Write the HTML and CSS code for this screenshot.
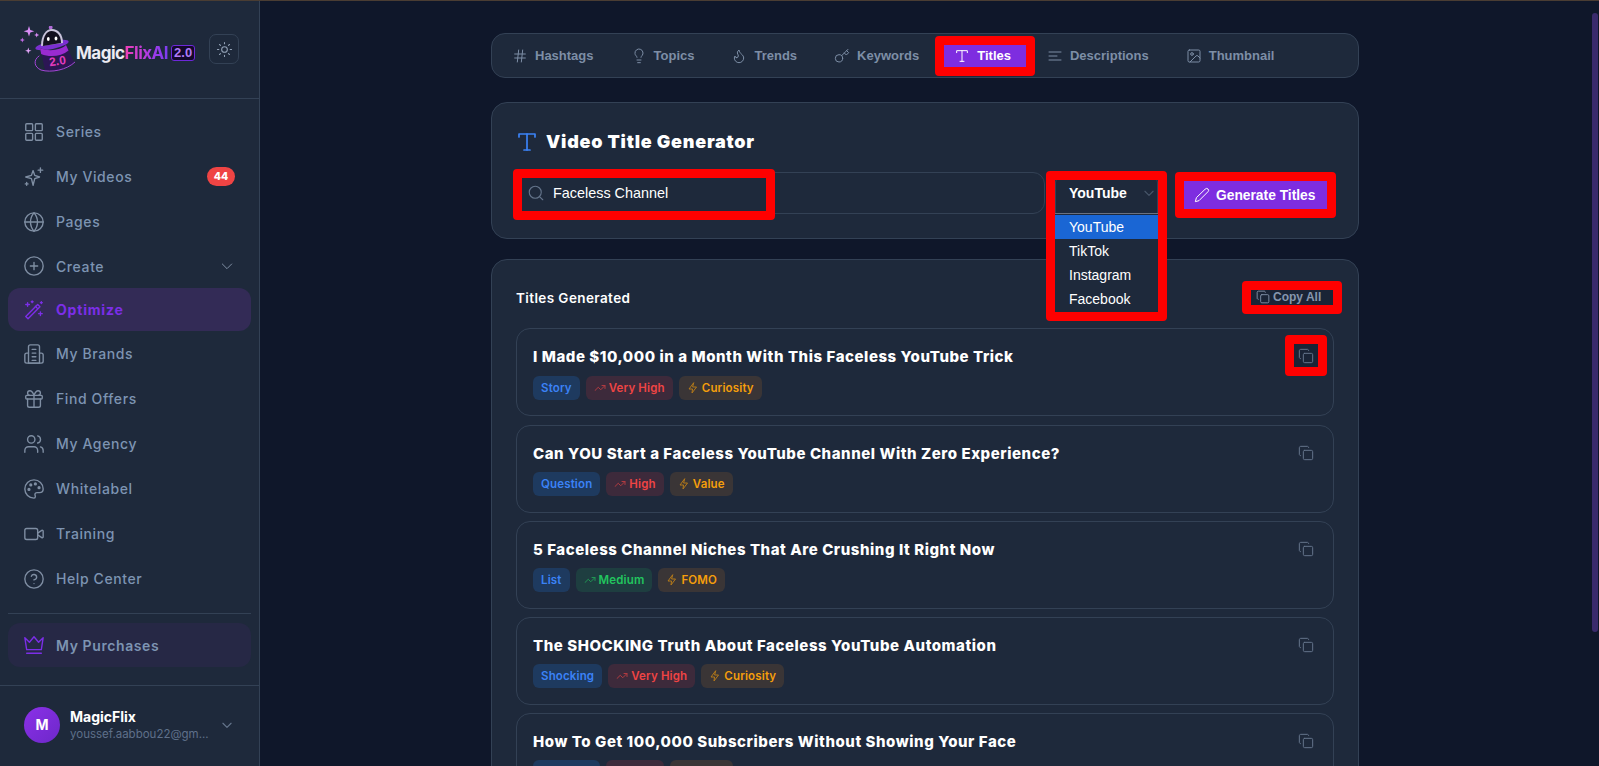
FILE: index.html
```html
<!DOCTYPE html>
<html>
<head>
    <meta charset="utf-8">
    <title>MagicFlixAI - Optimize</title>
    <link rel="stylesheet" href="styles.css">
</head>
<body>
<svg class="defs">
    <defs>
        <symbol id="i-copy" viewBox="0 0 24 24"><rect x="8" y="8" width="14" height="14" rx="2"/><path d="M4 16c-1.1 0-2-.9-2-2V4c0-1.1.9-2 2-2h10c1.1 0 2 .9 2 2"/></symbol>
        <symbol id="i-trend" viewBox="0 0 24 24"><path d="M22 7l-8.500 8.500-5-5L2 17"/><path d="M16 7h6v6"/></symbol>
        <symbol id="i-bolt" viewBox="0 0 24 24"><path d="M13 2L4 14h7l-1 8 9-12h-7z"/></symbol>
        <symbol id="i-t" viewBox="0 0 24 24"><path d="M4 7V4h16v3"/><path d="M12 4v16"/><path d="M9 20h6"/></symbol>
    </defs>
</svg>
<div class="app">
    <aside class="sidebar">
        <div class="side-head">
            <div class="logo">
                <svg class="logo-hat" viewBox="0 0 56 50">
                    <path d="M10 0l1.300 4 4 1.300-4 1.300-1.300 4-1.300-4-4-1.300 4-1.300z" fill="#d98cf5"/>
                    <path d="M17.700 6.500l.7 1.800 1.800.7-1.800.7-.7 1.800-.7-1.800-1.800-.7 1.800-.7z" fill="#d98cf5"/>
                    <path d="M3.300 11.500l.7 1.800 1.800.7-1.800.7-.7 1.800-.7-1.800-1.800-.7 1.800-.7z" fill="#c26be8"/>
                    <path d="M9.300 21.500l.8 2.400 2.400.8-2.400.8-.8 2.400-.8-2.400-2.400-.8 2.400-.8z" fill="#e3a5f8"/>
                    <circle cx="31.700" cy="1.500" r="1.900" fill="#b06ad8"/>
                    <ellipse cx="33" cy="19" rx="17" ry="4" transform="rotate(-12 33 19)" fill="#7b2fd0"/>
                    <path d="M22 20C22 9 27 3 33 3c6 0 11 5 11 14z" fill="#c9c4dc"/>
                    <path d="M24 20C24 10 28 5 32.500 5c5 0 9.500 4 9.500 12z" fill="#12101f"/>
                    <ellipse cx="29.300" cy="13" rx="1.400" ry="2" fill="#fff"/>
                    <ellipse cx="37" cy="12.500" rx="1.400" ry="2" fill="#fff"/>
                    <path d="M21 22c9 4 21 2 26-3l8 17c-7 8-21 10-29 8z" fill="#2c1654"/>
                    <path d="M21 22c9 4 21 2 26-3l2.500 5.500c-7 6-19 7-27.300 3.500z" fill="#9a2bd0"/>
                    <path d="M20 30c-6 4-5 11 2 14 10 3 26 0 34-8" fill="none" stroke="#a445d8" stroke-width="1"/>
                    <text class="hat-num" x="39" y="39" text-anchor="middle" transform="rotate(-8 39 39)">2.0</text>
                </svg>
                <span class="logo-text"><span class="logo-magic">Magic</span><span class="logo-flix">FlixAI</span></span>
                <span class="logo-ver">2.0</span>
            </div>
            <button class="theme-btn">
                <svg viewBox="0 0 24 24"><circle cx="12" cy="12" r="4"/><path d="M12 2v2M12 20v2M4.900 4.900l1.400 1.400M17.700 17.700l1.400 1.400M2 12h2M20 12h2M6.300 17.700l-1.400 1.400M19.100 4.900l-1.400 1.400"/></svg>
            </button>
        </div>
        <nav class="nav">
            <a class="nav-item"><svg viewBox="0 0 24 24"><rect x="3" y="3" width="7.500" height="7.500" rx="1"/><rect x="13.500" y="3" width="7.500" height="7.500" rx="1"/><rect x="3" y="13.500" width="7.500" height="7.500" rx="1"/><rect x="13.500" y="13.500" width="7.500" height="7.500" rx="1"/></svg>Series</a>
            <a class="nav-item"><svg viewBox="0 0 24 24"><path d="M11 5l1.800 5.200L18 12l-5.200 1.800L11 21l-1.800-7.200L3 12l6.200-1.800z"/><path d="M19 2v5M16.500 4.500h5M4 18v3M2.500 19.500h3"/></svg>My Videos<span class="badge">44</span></a>
            <a class="nav-item"><svg viewBox="0 0 24 24"><circle cx="12" cy="12" r="10"/><path d="M2 12h20"/><path d="M12 2a15 15 0 0 1 0 20 15 15 0 0 1 0-20z"/></svg>Pages</a>
            <a class="nav-item short"><svg viewBox="0 0 24 24"><circle cx="12" cy="12" r="10"/><path d="M12 8v8M8 12h8"/></svg>Create<svg class="nav-chev" viewBox="0 0 24 24"><path d="M5 9l7 7 7-7"/></svg></a>
            <a class="nav-item active"><svg viewBox="0 0 24 24"><path d="M3 20L16 7l2.500 2.500-13 13z" transform="translate(0 -1)"/><path d="M13.500 9l2.500 2.500" transform="translate(0 -1)"/><path d="M5 4v4M3 6h4M10 2v2M9 3h2M19 14v4M17 16h4M20 3v2M19 4h2"/></svg>Optimize</a>
            <a class="nav-item"><svg viewBox="0 0 24 24"><path d="M6 22V4c0-1.100.9-2 2-2h8c1.100 0 2 .9 2 2v18z"/><path d="M6 11H4c-1.100 0-2 .9-2 2v7c0 1.100.9 2 2 2h16c1.100 0 2-.9 2-2v-7c0-1.100-.9-2-2-2h-2"/><path d="M10 7h4M10 11h4M10 15h4M10 19h4"/></svg>My Brands</a>
            <a class="nav-item"><svg viewBox="0 0 24 24"><rect x="3" y="8" width="18" height="4" rx="1"/><path d="M12 8v13"/><path d="M19 12v7c0 1.100-.9 2-2 2H7c-1.100 0-2-.9-2-2v-7"/><path d="M7.500 8a2.500 2.500 0 0 1 0-5C10 3 12 8 12 8s2-5 4.500-5a2.500 2.500 0 0 1 0 5"/></svg>Find Offers</a>
            <a class="nav-item"><svg viewBox="0 0 24 24"><path d="M16 21v-2a4 4 0 0 0-4-4H6a4 4 0 0 0-4 4v2"/><circle cx="9" cy="7" r="4"/><path d="M22 21v-2a4 4 0 0 0-3-3.900"/><path d="M16 3.100a4 4 0 0 1 0 7.800"/></svg>My Agency</a>
            <a class="nav-item"><svg viewBox="0 0 24 24"><path d="M12 22a10 10 0 1 1 10-10c0 2.800-2.200 4-4 4h-2.500c-1.500 0-2.500 1-2.500 2.200 0 .7.500 1.100.5 1.800 0 1.200-.6 2-1.500 2z"/><circle cx="13.500" cy="6.500" r="1" fill="currentColor"/><circle cx="17.500" cy="10.500" r="1" fill="currentColor"/><circle cx="8.500" cy="7.500" r="1" fill="currentColor"/><circle cx="6.500" cy="12.500" r="1" fill="currentColor"/></svg>Whitelabel</a>
            <a class="nav-item"><svg viewBox="0 0 24 24"><rect x="2" y="6" width="14" height="12" rx="2"/><path d="M16 13l4.500 3c.5.300 1.500 0 1.500-.8V8.800c0-.8-1-1.100-1.500-.8L16 11"/></svg>Training</a>
            <a class="nav-item"><svg viewBox="0 0 24 24"><circle cx="12" cy="12" r="10"/><path d="M9.100 9a3 3 0 0 1 5.800 1c0 2-3 3-3 3"/><path d="M12 17h.01"/></svg>Help Center</a>
        </nav>
        <div class="purchases">
            <a class="nav-item buy"><svg viewBox="0 0 24 24"><path d="M2 4l5 5 5-6 5 6 5-5-2 13H4z"/><path d="M4 21h16"/></svg>My Purchases</a>
        </div>
        <div class="user">
            <div class="avatar">M</div>
            <div class="user-info">
                <div class="user-name">MagicFlix</div>
                <div class="user-mail">youssef.aabbou22@gm...</div>
            </div>
            <svg class="nav-chev" viewBox="0 0 24 24"><path d="M5 9l7 7 7-7"/></svg>
        </div>
    </aside>

    <main class="main">
        <div class="wrap">
            <div class="tabs">
                <button class="tab"><svg viewBox="0 0 24 24"><path d="M4 9h16M4 15h16M10 3L8 21M16 3l-2 18"/></svg>Hashtags</button>
                <button class="tab"><svg viewBox="0 0 24 24"><path d="M15 14c.2-1 .7-1.700 1.500-2.500A6 6 0 1 0 6 8c0 1 .2 2.200 1.500 3.500.7.700 1.300 1.500 1.500 2.500"/><path d="M9 18h6M10 22h4"/></svg>Topics</button>
                <button class="tab"><svg viewBox="0 0 24 24"><path d="M8.500 14.500A2.500 2.500 0 0 0 11 12c0-1.400-.5-2-1-3-1.100-2.100-.2-4.100 2-6 .5 2.500 2 4.900 4 6.500s3 3.500 3 5.500a7 7 0 1 1-14 0c0-1.200.4-2.300 1-3a2.500 2.500 0 0 0 2.500 2.500z"/></svg>Trends</button>
                <button class="tab"><svg viewBox="0 0 24 24"><circle cx="7.500" cy="15.500" r="5.500"/><path d="M21 2l-9.600 9.600M15.500 7.500l3 3L22 7l-3-3"/></svg>Keywords</button>
                <button class="tab on"><svg viewBox="0 0 24 24"><use href="#i-t"/></svg>Titles<span class="mark mark-tab"></span></button>
                <button class="tab"><svg viewBox="0 0 24 24"><path d="M3 6h18M3 12h12M3 18h18"/></svg>Descriptions</button>
                <button class="tab"><svg viewBox="0 0 24 24"><rect x="3" y="3" width="18" height="18" rx="2"/><circle cx="9" cy="9" r="2"/><path d="M21 15l-3.100-3.100a2 2 0 0 0-2.800 0L6 21"/></svg>Thumbnail</button>
            </div>

            <section class="card gen">
                <h2 class="gen-title"><svg viewBox="0 0 24 24"><use href="#i-t"/></svg>Video Title Generator</h2>
                <div class="gen-row">
                    <div class="search">
                        <svg viewBox="0 0 24 24"><circle cx="11" cy="11" r="8"/><path d="M21 21l-4.300-4.300"/></svg>
                        <span>Faceless Channel</span>
                        <span class="mark mark-search"></span>
                    </div>
                    <div class="select">
                        <div class="select-box">YouTube<svg class="nav-chev" viewBox="0 0 24 24"><path d="M5 9l7 7 7-7"/></svg></div>
                        <ul class="options">
                            <li class="sel">YouTube</li>
                            <li>TikTok</li>
                            <li>Instagram</li>
                            <li>Facebook</li>
                        </ul>
                        <span class="mark mark-select"></span>
                    </div>
                    <button class="gen-btn"><svg viewBox="0 0 24 24"><path d="M17 3a2.800 2.800 0 1 1 4 4L7.500 20.500 2 22l1.500-5.500z"/></svg>Generate Titles<span class="mark mark-gen"></span></button>
                </div>
            </section>

            <section class="card results">
                <div class="res-head">
                    <h3>Titles Generated</h3>
                    <button class="copy-all"><svg viewBox="0 0 24 24"><use href="#i-copy"/></svg>Copy All<span class="mark mark-all"></span></button>
                </div>
                <article class="item">
                    <div class="item-title">I Made $10,000 in a Month With This Faceless YouTube Trick</div>
                    <div class="tags">
                        <span class="tag blue">Story</span>
                        <span class="tag red"><svg viewBox="0 0 24 24"><use href="#i-trend"/></svg>Very High</span>
                        <span class="tag amber"><svg viewBox="0 0 24 24"><use href="#i-bolt"/></svg>Curiosity</span>
                    </div>
                    <button class="copy-one first"><svg viewBox="0 0 24 24"><use href="#i-copy"/></svg><span class="mark mark-one"></span></button>
                </article>
                <article class="item">
                    <div class="item-title">Can YOU Start a Faceless YouTube Channel With Zero Experience?</div>
                    <div class="tags">
                        <span class="tag blue">Question</span>
                        <span class="tag red"><svg viewBox="0 0 24 24"><use href="#i-trend"/></svg>High</span>
                        <span class="tag amber"><svg viewBox="0 0 24 24"><use href="#i-bolt"/></svg>Value</span>
                    </div>
                    <button class="copy-one"><svg viewBox="0 0 24 24"><use href="#i-copy"/></svg></button>
                </article>
                <article class="item">
                    <div class="item-title">5 Faceless Channel Niches That Are Crushing It Right Now</div>
                    <div class="tags">
                        <span class="tag blue">List</span>
                        <span class="tag green"><svg viewBox="0 0 24 24"><use href="#i-trend"/></svg>Medium</span>
                        <span class="tag amber"><svg viewBox="0 0 24 24"><use href="#i-bolt"/></svg>FOMO</span>
                    </div>
                    <button class="copy-one"><svg viewBox="0 0 24 24"><use href="#i-copy"/></svg></button>
                </article>
                <article class="item">
                    <div class="item-title">The SHOCKING Truth About Faceless YouTube Automation</div>
                    <div class="tags">
                        <span class="tag blue">Shocking</span>
                        <span class="tag red"><svg viewBox="0 0 24 24"><use href="#i-trend"/></svg>Very High</span>
                        <span class="tag amber"><svg viewBox="0 0 24 24"><use href="#i-bolt"/></svg>Curiosity</span>
                    </div>
                    <button class="copy-one"><svg viewBox="0 0 24 24"><use href="#i-copy"/></svg></button>
                </article>
                <article class="item">
                    <div class="item-title">How To Get 100,000 Subscribers Without Showing Your Face</div>
                    <div class="tags">
                        <span class="tag blue">Question</span>
                        <span class="tag red"><svg viewBox="0 0 24 24"><use href="#i-trend"/></svg>High</span>
                        <span class="tag amber"><svg viewBox="0 0 24 24"><use href="#i-bolt"/></svg>Value</span>
                    </div>
                    <button class="copy-one"><svg viewBox="0 0 24 24"><use href="#i-copy"/></svg></button>
                </article>
            </section>
        </div>
    </main>
    <div class="scrollbar"><div class="thumb"></div></div>
</div>
</body>
</html>
```

FILE: styles.css
```css
* {
    box-sizing: border-box;
}

html, body {
    margin: 0;
    height: 100%;
    overflow: hidden;
}

body {
    background: #0f172a;
    color: #fff;
    font-family: "Inter", "Liberation Sans", sans-serif;
}

.defs {
    display: none;
}

svg {
    fill: none;
    stroke: currentColor;
    stroke-width: 2;
    stroke-linecap: round;
    stroke-linejoin: round;
    flex-shrink: 0;
}

button {
    border: 0;
    background: none;
    padding: 0;
    font: inherit;
    color: inherit;
}

.app {
    display: flex;
    height: 766px;
    border-top: 1px solid #4a3d33;
}

/* sidebar */
.sidebar {
    width: 260px;
    flex-shrink: 0;
    background: #1e293b;
    border-right: 1px solid #334155;
    display: flex;
    flex-direction: column;
}

.side-head {
    height: 98px;
    flex-shrink: 0;
    border-bottom: 1px solid #334155;
    display: flex;
    align-items: center;
    justify-content: space-between;
    padding: 0 20px 0 19px;
}

.logo {
    display: flex;
    align-items: center;
    margin-top: 3px;
}

.logo-hat {
    width: 56px;
    height: 50px;
    stroke: none;
    margin-right: 1px;
}

.hat-num {
    font: 800 12px "Liberation Sans", sans-serif;
    fill: #e23bbd;
    stroke: none;
}

.logo-text {
    margin-top: 4px;
    font: 700 17px "Inter", sans-serif;
    letter-spacing: -0.5px;
}

.logo-magic {
    color: #ecebf2;
}

.logo-flix {
    background: linear-gradient(90deg, #f03fb6, #a63be8 60%, #7b3df0);
    -webkit-background-clip: text;
    background-clip: text;
    color: transparent;
}

.logo-ver {
    margin: 4px 0 0 3px;
    padding: 0 2px;
    border: 1px solid #6d28d9;
    border-radius: 3px;
    background: #14082b;
    color: #b07af5;
    font: 700 13px "Liberation Sans", sans-serif;
    line-height: 14px;
}

.theme-btn {
    width: 30px;
    height: 30px;
    margin-top: -1px;
    border: 1px solid #334155;
    border-radius: 7px;
    color: #94a3b8;
    display: flex;
    align-items: center;
    justify-content: center;
}

.theme-btn svg {
    width: 17px;
    height: 17px;
    stroke-width: 1.500;
}

.nav {
    padding: 10px 8px 0;
}

.nav-item {
    height: 45px;
    display: flex;
    align-items: center;
    padding: 0 16px 0 15px;
    gap: 11px;
    color: #7d94b2;
    font-size: 14px;
    font-weight: 500;
    letter-spacing: 0.6px;
    border-radius: 12px;
}

.nav-item svg {
    width: 22px;
    height: 22px;
    stroke-width: 1.500;
    color: #7f8ea3;
}

.nav-item.short {
    height: 44px;
}

.nav-item .nav-chev {
    width: 16px;
    height: 16px;
    margin-left: auto;
}

.nav-chev {
    width: 14px;
    height: 14px;
    color: #64748b;
}

.nav-item.active {
    height: 43px;
    background: #332b56;
    color: #7c2ee8;
    font-weight: 700;
    letter-spacing: 0.8px;
}

.nav-item.active svg {
    color: #7c2ee8;
}

.badge {
    margin-left: auto;
    width: 28px;
    height: 19px;
    border-radius: 10px;
    background: #ef4444;
    color: #fff;
    font-size: 10.500px;
    font-weight: 800;
    letter-spacing: 0;
    line-height: 19px;
    text-align: center;
}

.purchases {
    margin: 12px 8px 0;
    padding-top: 9px;
    border-top: 1px solid #334155;
}

.nav-item.buy {
    height: 44px;
    background: #262845;
    font-weight: 600;
}

.nav-item.buy svg {
    color: #7c2ee8;
}

.user {
    margin-top: 18px;
    height: 81px;
    border-top: 1px solid #334155;
    display: flex;
    align-items: center;
    padding: 0 24px 2px;
    gap: 10px;
}

.avatar {
    width: 36px;
    height: 36px;
    border-radius: 50%;
    background: linear-gradient(135deg, #8b30e8, #6d28c9);
    font-size: 14px;
    font-weight: 700;
    line-height: 36px;
    text-align: center;
    flex-shrink: 0;
}

.user-info {
    width: 140px;
}

.user-name {
    font-size: 14px;
    font-weight: 700;
    line-height: 18px;
}

.user-mail {
    font-size: 11.500px;
    color: #5f708a;
    line-height: 16px;
    white-space: nowrap;
    overflow: hidden;
}

/* main */
.main {
    flex: 1;
    overflow: hidden;
    padding-top: 32px;
}

.wrap {
    width: 868px;
    margin: 0 auto;
}

.scrollbar {
    width: 9px;
    flex-shrink: 0;
    padding: 12px 1px 0 2px;
}

.thumb {
    height: 619px;
    border-radius: 3px;
    background: #3a2a6c;
}

/* tabs */
.tabs {
    height: 45px;
    border: 1px solid #334155;
    border-radius: 14px;
    background: #1e293b;
    display: flex;
    align-items: center;
    padding: 0 7px;
    gap: 8px;
}

.tab {
    position: relative;
    display: flex;
    align-items: center;
    gap: 7px;
    height: 22px;
    padding: 0 16px 0 13px;
    color: #7d8ea6;
    font: 700 13px "Liberation Sans", sans-serif;
}

.tab svg {
    width: 16px;
    height: 16px;
    stroke-width: 1.500;
}

.tab.on {
    margin-left: 1px;
    background: #7e2de0;
    color: #fff;
    padding: 0 15px 0 10px;
}

/* generator card */
.card {
    border: 1px solid #334155;
    border-radius: 16px;
    background: #1e293b;
}

.gen {
    margin-top: 24px;
    height: 137px;
    padding: 27px 24px 0 23px;
}

.gen-title {
    margin: 0;
    display: flex;
    align-items: center;
    gap: 7px;
    font-size: 18px;
    font-weight: 900;
    letter-spacing: 0.75px;
    line-height: 24px;
}

.gen-title svg {
    width: 24px;
    height: 24px;
    color: #3b82f6;
    stroke-width: 1.700;
}

.gen-row {
    display: flex;
    margin-top: 18px;
    gap: 10px;
    align-items: flex-start;
}

.search {
    position: relative;
    flex: 1;
    height: 42px;
    border: 1px solid #334155;
    border-radius: 12px;
    display: flex;
    align-items: center;
    padding-left: 11px;
    gap: 8px;
    font: 14.400px "Liberation Sans", sans-serif;
}

.search svg {
    width: 18px;
    height: 18px;
    color: #64748b;
    stroke-width: 1.500;
}

.select {
    position: relative;
    width: 103px;
}

.select-box {
    height: 42px;
    border: 1px solid #334155;
    border-radius: 12px 12px 0 0;
    border-top: 0;
    display: flex;
    align-items: center;
    justify-content: space-between;
    padding: 0 1px 0 13px;
    font: 700 14px "Liberation Sans", sans-serif;
}

.select-box .nav-chev {
    color: #475569;
}

.options {
    position: absolute;
    top: 41px;
    left: 0;
    width: 103px;
    margin: 0;
    padding: 1px 0;
    list-style: none;
    background: #1e293b;
    border-top: 1px solid #6b7280;
    border-bottom: 1px solid #6b7280;
    z-index: 2;
}

.options li {
    height: 24px;
    padding-left: 14px;
    font: 14px/24px "Liberation Sans", sans-serif;
}

.options li.sel {
    background: #1a66d4;
}

.gen-btn {
    position: relative;
    margin: 9px 7px 0 16px;
    width: 143px;
    height: 28px;
    background: #7e2de0;
    display: flex;
    align-items: center;
    padding-left: 10px;
    gap: 6px;
    font: 700 13.800px "Liberation Sans", sans-serif;
}

.gen-btn svg {
    width: 16px;
    height: 16px;
    stroke-width: 1.500;
}

/* red marker boxes drawn over the shot */
.mark {
    position: absolute;
    border: 9px solid #f00;
    border-radius: 4px;
    pointer-events: none;
}

.mark-tab, .mark-gen, .mark-all, .mark-one {
    inset: -9px;
}

.mark-search {
    left: -3px;
    top: -4px;
    width: 262px;
    height: 51px;
}

.mark-select {
    left: -9px;
    top: -1px;
    width: 121px;
    height: 150px;
    z-index: 3;
}

/* results */
.results {
    margin-top: 20px;
    padding: 0 24px;
    height: 700px;
}

.res-head {
    height: 68px;
    display: flex;
    align-items: center;
    justify-content: space-between;
    padding-top: 6px;
}

.res-head h3 {
    margin: 2px 0 0;
    font-size: 13.500px;
    font-weight: 600;
    letter-spacing: 0.4px;
}

.copy-all {
    position: relative;
    width: 82px;
    height: 15px;
    margin-right: 1px;
    background: #1a2436;
    display: flex;
    align-items: center;
    padding-left: 5px;
    gap: 3px;
    color: #8796ad;
    font: 700 12px "Liberation Sans", sans-serif;
}

.copy-all svg {
    width: 14px;
    height: 14px;
    stroke-width: 1.500;
}

.item {
    position: relative;
    height: 88px;
    margin-bottom: 8px;
    border: 1px solid #334155;
    border-radius: 14px;
    padding: 17px 16px 0;
}

.res-head + .item {
    margin-bottom: 9px;
}

.item-title {
    font-size: 15px;
    font-weight: 800;
    letter-spacing: 0.56px;
    line-height: 22px;
}

.tags {
    display: flex;
    gap: 6px;
    margin-top: 7px;
}

.res-head + .item .tags {
    margin-top: 8px;
}

.tag {
    display: flex;
    align-items: center;
    height: 24px;
    padding: 0 8px;
    gap: 3px;
    border-radius: 6px;
    font-size: 11.500px;
    font-weight: 600;
    letter-spacing: 0.15px;
}

.tag svg {
    width: 12px;
    height: 12px;
    opacity: 0.65;
}

.blue {
    background: #1e3a5f;
    color: #3b82f6;
}

.red {
    background: #3d2a3b;
    color: #ef4444;
}

.green {
    background: #1e3e40;
    color: #22c55e;
}

.amber {
    background: #3a3536;
    color: #f59e0b;
}

.copy-one {
    position: absolute;
    right: 15px;
    top: 15px;
    width: 24px;
    height: 23px;
    color: #64748b;
    display: flex;
    align-items: center;
    justify-content: center;
}

.copy-one.first {
    background: #1a2436;
}

.copy-one svg {
    width: 16px;
    height: 16px;
    stroke-width: 1.500;
}
```
